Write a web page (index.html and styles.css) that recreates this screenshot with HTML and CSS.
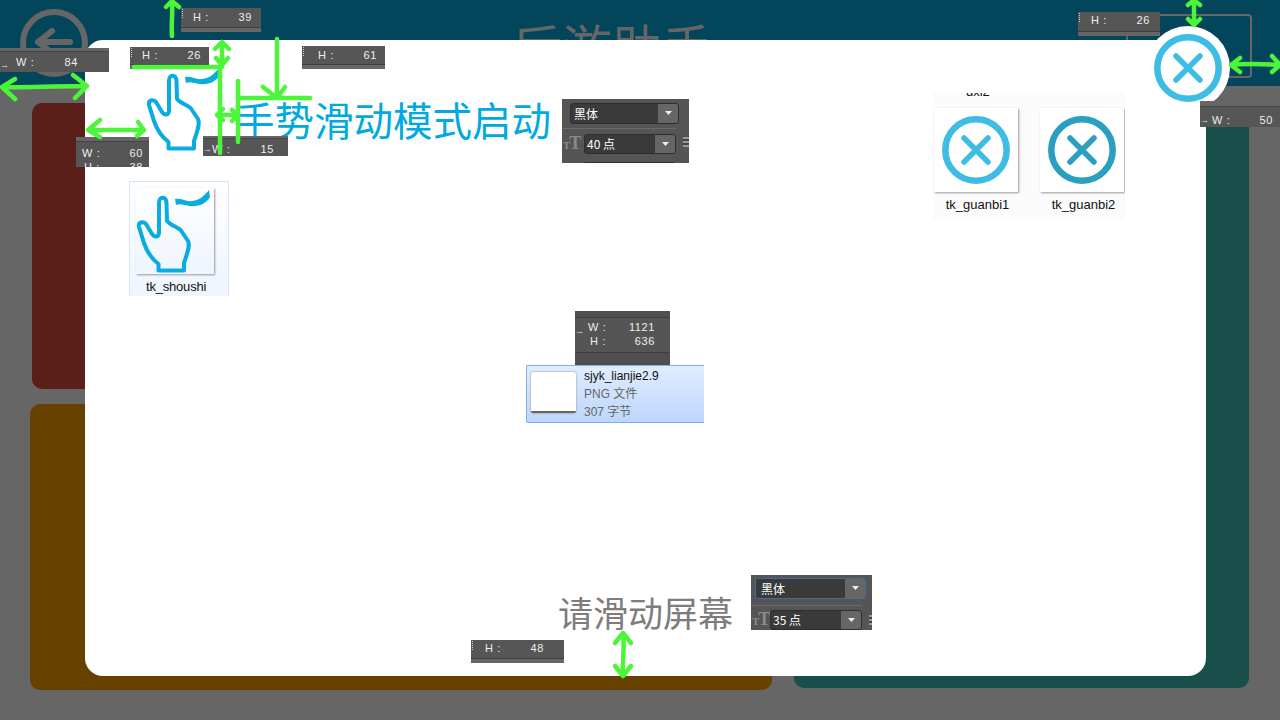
FILE: index.html
```html
<!DOCTYPE html>
<html lang="zh">
<head>
<meta charset="utf-8">
<title>手势滑动模式启动</title>
<link rel="stylesheet" href="styles.css">
</head>
<body>
<div class="page">
  <header class="topbar">
    <svg class="back" width="70" height="70" viewBox="0 0 70 70"><circle cx="35" cy="35" r="31" fill="none" stroke="#666" stroke-width="6"/><path d="M51 34H19M33 23 19 34l14 11" fill="none" stroke="#666" stroke-width="6" stroke-linecap="round" stroke-linejoin="round"/></svg>
    <div class="app-title">后游助手</div>
    <div class="top-box"></div>
  </header>
  <main class="panels">
    <div class="col-left">
      <div class="panel red"></div>
      <div class="panel orange"></div>
    </div>
    <div class="panel teal"></div>
  </main>
</div>

<section class="modal">
  <div class="head-title">手势滑动模式启动</div>
  <div class="hint">请滑动屏幕</div>

  <svg class="hand" width="76" height="80" viewBox="0 0 76 80"><use href="#hand-shape"/></svg>

  <div class="thumb-group hand-file">
    <div class="thumb">
      <svg width="76" height="80" viewBox="0 0 76 80"><use href="#hand-shape"/></svg>
    </div>
    <div class="file-label shoushi">tk_shoushi</div>
  </div>

  <div class="close-files">
    <div class="cut-label">dxi2</div>
    <div class="close-row">
      <div class="close-item">
        <div class="thumb plain"><svg class="x-light" width="70" height="70" viewBox="0 0 70 70"><use href="#x-icon"/></svg></div>
        <div class="file-label">tk_guanbi1</div>
      </div>
      <div class="close-item">
        <div class="thumb plain"><svg class="x-dark" width="70" height="70" viewBox="0 0 70 70"><use href="#x-icon"/></svg></div>
        <div class="file-label">tk_guanbi2</div>
      </div>
    </div>
  </div>

  <div class="file-card">
    <div class="mini"></div>
    <div class="file-info">
      <div class="fname">sjyk_lianjie2.9</div>
      <div>PNG 文件</div>
      <div>307 字节</div>
    </div>
  </div>
</section>

<div class="close-btn"><svg class="x-light" width="70" height="70" viewBox="0 0 70 70"><use href="#x-icon"/></svg></div>

<div class="ps arrow w84"><span>W :</span><span>84</span></div>
<div class="ps grip h39"><span>H :</span><span>39</span></div>
<div class="ps grip h26a"><span>H :</span><span>26</span></div>
<div class="ps grip h61"><span>H :</span><span>61</span></div>
<div class="ps w60">
  <div class="line"><span>W :</span><span>60</span></div>
  <div class="line indent"><span>H :</span><span>38</span></div>
</div>
<div class="ps arrow w15"><span>W :</span><span>15</span></div>
<div class="ps grip h26b"><span>H :</span><span>26</span></div>
<div class="ps arrow w50"><span>W :</span><span>50</span></div>
<div class="ps grip h48"><span>H :</span><span>48</span></div>
<div class="ps arrow wh">
  <div class="line"><span>W :</span><span>1121</span></div>
  <div class="line indent"><span>H :</span><span>636</span></div>
</div>

<div class="font-panel fp40">
  <div class="select wide"><span>黑体</span><i class="drop"></i></div>
  <div class="size-row"><span class="tt"><small>T</small>T</span><div class="select"><span>40 点</span><i class="drop"></i></div></div>
  <div class="cut-row"></div>
</div>
<div class="font-panel fp35">
  <div class="select wide focus"><span>黑体</span><i class="drop"></i></div>
  <div class="size-row"><span class="tt"><small>T</small>T</span><div class="select"><span>35 点</span><i class="drop"></i></div></div>
</div>

<svg class="marks" width="1280" height="720" viewBox="0 0 1280 720" fill="none" stroke="#4df53a" stroke-width="4.5" stroke-linecap="round" stroke-linejoin="round">
  <path d="M172 36C171 24 173 12 172 1M166 7 172 1l7 6"/>
  <path d="M2 87C30 88 60 86 86 86M15 79 2 87l13 12M73 75l14 11-12 12"/>
  <path d="M88 130H143M100 120 88 130l12 7M138 122l6 8-7 6"/>
  <path d="M134 67H222M222 43V65M215 49l7-7 7 7M216 58l6 7 6-7"/>
  <path d="M220 68V153M238 81V142M217 115H238M223 109 217 115l6 5M232 110l6 5-6 6"/>
  <path d="M277 39V98M240 98H310M263 87l14 11 8-11"/>
  <path d="M623 633C625 648 622 662 623 676M615 643l8-10 8 10M615 666l8 10 8-10"/>
  <path d="M1194 0V25M1188 5l6-5 6 5M1188 19l6 6 6-6"/>
  <path d="M1231 65C1248 63 1264 64 1280 65M1240 58 1231 65l9 7M1272 56l8 9-8 7"/>
</svg>

<svg class="defs" width="0" height="0">
  <defs>
    <g id="hand-shape">
      <path fill="none" stroke="#0aace0" stroke-width="4" stroke-linecap="round" stroke-linejoin="round" d="M9 34C8 29 13 28 16 31L22 41C25 45 28.500 44 29 40L29 10C29 3 36 3 36.500 10L37 28C42 34 50 34 52 39L58 48C60 52 58 58 56 64L54 70V77.500H28.500V71C22 66 17 59 14 50Z"/>
      <path fill="#0aace0" d="M45 6C52 5 56 9 62 8 70 7 74 3 79 -3L80 4C76 11 68 14 60 13 54 12 50 10 46 12Z"/>
    </g>
    <g id="x-icon" fill="none" stroke="currentColor" stroke-linecap="round">
      <circle cx="35" cy="35" r="30.700" stroke-width="6.500"/>
      <path stroke-width="5.500" d="M23 23 47 47M47 23 23 47"/>
    </g>
  </defs>
</svg>
</body>
</html>
```
FILE: styles.css
```css
* { box-sizing: border-box; }
html, body { margin: 0; height: 720px; overflow: hidden; }
body { position: relative; background: #666; font-family: "Liberation Sans", "Noto Sans CJK SC", sans-serif; }
svg { overflow: visible; }

.page { width: 1280px; height: 720px; display: flex; flex-direction: column; }
.topbar { height: 86px; background: #03465c; position: relative; flex: none; }
.back { position: absolute; left: 19px; top: 8px; }
.app-title { position: absolute; left: 512px; top: 15px; font-size: 50px; line-height: 60px; color: #666; font-family: "Noto Sans CJK SC", sans-serif; }
.top-box { position: absolute; left: 1126px; top: 14px; width: 126px; height: 64px; border: 2px solid #666; border-radius: 4px; }
.panels { flex: 1; display: flex; padding: 17px 31px 30px 30px; gap: 22px; }
.col-left { width: 742px; display: flex; flex-direction: column; gap: 15px; flex: none; }
.panel { border-radius: 10px; }
.red { height: 286px; margin-left: 2px; background: #5a1f19; }
.orange { height: 286px; background: #664100; }
.teal { flex: 1; background: #184f4a; margin-bottom: 2px; }

.modal { position: absolute; left: 85px; top: 40px; width: 1121px; height: 636px; background: #fff; border-radius: 18px; }
.head-title { position: absolute; left: 150px; top: 59px; font-size: 39.500px; line-height: 40px; color: #00a9e0; font-family: "Noto Sans CJK SC", sans-serif; white-space: nowrap; }
.hint { position: absolute; left: 473px; top: 550px; font-size: 35px; line-height: 44px; color: #7d7d7d; font-family: "Noto Sans CJK SC", sans-serif; white-space: nowrap; }
.hand { position: absolute; left: 55px; top: 31px; }

.thumb-group { position: absolute; }
.hand-file { left: 44px; top: 141px; width: 100px; height: 115px; background: linear-gradient(#fff, #eef5fe); border: 1px solid #d5e6fb; border-bottom: 0; display: flex; flex-direction: column; align-items: flex-start; padding: 6px 0 0 6px; }
.thumb { width: 78px; height: 86px; background: linear-gradient(#fff, #eef5fd); box-shadow: 1px 1px 2px #999; display: flex; align-items: flex-start; justify-content: flex-start; flex: none; }
.thumb > svg { margin: 5px 0 0 -6px; }
.thumb.plain { width: 84px; height: 84px; background: #fff; align-items: center; justify-content: center; }
.thumb.plain > svg { margin: 0; }
.file-label { font-size: 13px; line-height: 16px; color: #111; text-align: center; margin-top: 5px; padding-left: 3px; white-space: nowrap; }
.shoushi { margin: 5px 0 0 10px; padding: 0; letter-spacing: -0.2px; }

.close-files { position: absolute; left: 848px; top: 53px; width: 192px; height: 126px; background: #fbfbfb; overflow: hidden; }
.cut-label { position: absolute; left: 33px; top: -9px; font-size: 13px; line-height: 16px; color: #111; }
.close-row { display: flex; gap: 22px; padding: 15px 0 0 1px; }
.close-item { width: 84px; display: flex; flex-direction: column; align-items: center; }
.x-light { color: #3dbde4; }
.x-dark { color: #2a9fc0; }

.file-card { position: absolute; left: 441px; top: 325px; width: 178px; height: 58px; background: linear-gradient(#e0edfd, #bcd6fb); border: 1px solid #83aedd; border-right: 0; border-radius: 2px 0 0 2px; display: flex; gap: 8px; padding: 6px 0 0 4px; }
.mini { width: 45px; height: 41px; background: #fff; border-bottom: 2px solid #666; box-shadow: 0 0 2px #777; border-radius: 2px; flex: none; }
.file-info { font-size: 12px; line-height: 18px; color: #666; margin-top: -5px; }
.fname { color: #111; }

.close-btn { position: absolute; left: 1146px; top: 26px; width: 84px; height: 84px; background: #fff; border-radius: 50%; display: flex; align-items: center; justify-content: center; }

.ps { position: absolute; background: linear-gradient(#565656 0 calc(100% - 5px), #3f3f3f calc(100% - 5px) calc(100% - 4px), #666 calc(100% - 4px)); color: #eee; font-size: 11px; font-family: "Liberation Sans", "Noto Sans CJK SC", sans-serif; letter-spacing: 0.6px; line-height: 18px; display: flex; justify-content: space-between; white-space: nowrap; overflow: hidden; }
.grip::before { content: ""; position: absolute; left: 1px; top: 1px; height: 9px; border-left: 1px dotted #ccc; }
.arrow::before { content: "→"; position: absolute; left: 0; bottom: 2px; font-size: 9px; line-height: 10px; letter-spacing: 0; color: #ddd; }
.w84 { left: 0; top: 48px; width: 109px; height: 24px; padding: 5px 31px 0 16px; background: linear-gradient(#666 0 3px, #444 3px 4px, #565656 4px); }
.h39 { left: 181px; top: 8px; width: 80px; height: 24px; padding: 0 9px 0 12px; }
.h26a { left: 130px; top: 47px; width: 79px; height: 22px; padding: 0 8px 0 12px; line-height: 16px; }
.h61 { left: 302px; top: 46px; width: 83px; height: 23px; padding: 0 8px 0 16px; }
.w60 { left: 76px; top: 137px; width: 73px; height: 30px; display: block; padding: 9px 6px 0 6px; line-height: 14px; background: linear-gradient(#666 0 4px, #444 4px 5px, #565656 5px); }
.w15 { left: 203px; top: 136px; width: 85px; height: 20px; padding: 4px 14px 0 9px; background: linear-gradient(#666 0 2px, #444 2px 3px, #565656 3px); }
.h26b { left: 1078px; top: 12px; width: 82px; height: 24px; padding: 0 10px 0 13px; line-height: 17px; }
.w50 { left: 1200px; top: 101px; width: 80px; height: 26px; padding: 10px 7px 0 12px; background: linear-gradient(#666 0 5px, #444 5px 6px, #565656 6px); }
.h48 { left: 471px; top: 640px; width: 93px; height: 23px; padding: 0 20px 0 14px; line-height: 17px; }
.wh { left: 575px; top: 311px; width: 95px; height: 54px; display: block; padding: 9px 15px 0 13px; line-height: 14px; background: linear-gradient(#4f4f4f 0 6px, #3f3f3f 6px 7px, #555 7px 41px, #3f3f3f 41px 42px, #4f4f4f 42px); }
.wh::before { bottom: auto; top: 15px; }
.line { display: flex; justify-content: space-between; }
.indent { padding-left: 2px; }

.font-panel { position: absolute; background: #555; overflow: hidden; font-size: 12px; color: #fff; font-family: "Noto Sans CJK SC", sans-serif; }
.font-panel::after { content: ""; position: absolute; right: 0; width: 6px; height: 10px; background: repeating-linear-gradient(#999 0 2px, #444 2px 4px); }
.fp40::after { top: 38px; }
.fp35::after { top: 40px; right: 0; width: 3px; }
.fp40 { left: 562px; top: 99px; width: 127px; height: 64px; padding: 4px 0 0 8px; }
.fp35 { left: 751px; top: 575px; width: 121px; height: 55px; padding: 3px 0 0 4px; }
.select { height: 20px; flex: 1; background: #3a3a3a; border: 1px solid #2e2e2e; border-radius: 3px; display: flex; align-items: center; justify-content: space-between; padding-left: 2px; overflow: hidden; line-height: 18px; }
.select.wide { flex: none; width: 109px; height: 21px; padding-left: 3px; }
.fp35 .select.wide { width: 111px; }
.select.focus { border-color: #4468a8; }
.select.wide.focus { padding-left: 5px; }
.drop { width: 20px; height: 100%; background: #666; position: relative; flex: none; }
.drop::after { content: ""; position: absolute; left: 7px; top: 7px; width: 7px; height: 4px; background: #eee; clip-path: polygon(0 0, 100% 0, 50% 100%); }
.size-row { display: flex; align-items: center; gap: 3px; margin: 4px 0 0 -8px; padding: 4px 0 0 1px; border-top: 1px solid #6a6a6a; width: 114px; }
.fp35 .size-row { margin: 6px 0 0 -4px; width: 111px; padding: 3px 0 0 1px; gap: 1px; }
.tt { font-family: "Liberation Serif", serif; font-weight: 700; font-size: 18px; line-height: 20px; color: #8a8a8a; width: 18px; flex: none; white-space: nowrap; letter-spacing: -1px; }
.fp35 .tt { width: 17px; }
.tt small { font-size: 11px; }
.cut-row { width: 93px; height: 20px; margin: 7px 0 0 13px; background: #3a3a3a; border: 1px solid #2e2e2e; border-radius: 3px; }

.marks { position: absolute; left: 0; top: 0; pointer-events: none; }
.defs { position: absolute; }
```
